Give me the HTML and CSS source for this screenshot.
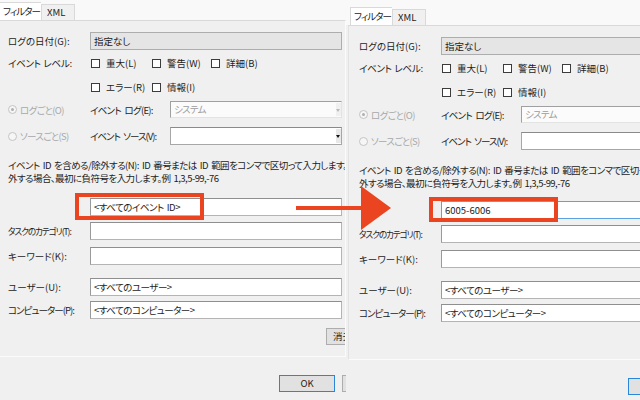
FILE: index.html
```html
<!DOCTYPE html>
<html lang="ja">
<head>
<meta charset="utf-8">
<title>フィルター</title>
<link rel="stylesheet" href="styles.css">
</head>
<body>
<div class="stage">
  <section class="dlg dlg-left">
    <div class="head">
      <div class="tabs">
        <div class="tab tab-on">フィルター</div>
        <div class="tab">XML</div>
      </div>
    </div>
    <div class="pane">
      <div class="row row-date">
        <span class="lbl">ログの日付(G):</span>
        <div class="combo combo-flat">指定なし</div>
      </div>
      <div class="row row-level">
        <span class="lbl">イベント レベル:</span>
        <div class="checks">
          <span class="chk"><i class="box"></i>重大(L)</span>
          <span class="chk"><i class="box"></i>警告(W)</span>
          <span class="chk"><i class="box"></i>詳細(B)</span>
          <span class="chk"><i class="box"></i>エラー(R)</span>
          <span class="chk"><i class="box"></i>情報(I)</span>
        </div>
      </div>
      <div class="row row-src1">
        <span class="radio off"><i class="dot on"></i><span class="t6">ログごと(O)</span></span>
        <span class="lbl2 t7">イベント ログ(E):</span>
        <div class="combo combo-dis">システム<i class="drop drop-dis"></i></div>
      </div>
      <div class="row row-src2">
        <span class="radio off"><i class="dot"></i><span class="t7">ソースごと(S)</span></span>
        <span class="lbl2 t9">イベント ソース(V):</span>
        <div class="combo combo-edit"><i class="drop"></i></div>
      </div>
      <p class="desc">イベント ID を含める/除外する(N): ID 番号または ID 範囲をコンマで区切って入力します。除<br>外する場合、最初に負符号を入力します。例 1,3,5-99,-76</p>
      <div class="row row-id">
        <span class="lbl"></span>
        <div class="edit">&lt;すべてのイベント ID&gt;</div>
        <span class="mark"></span>
      </div>
      <div class="row row-task">
        <span class="lbl t11">タスクのカテゴリ(T):</span>
        <div class="edit"></div>
      </div>
      <div class="row row-kw">
        <span class="lbl">キーワード(K):</span>
        <div class="edit"></div>
      </div>
      <div class="row row-user">
        <span class="lbl">ユーザー(U):</span>
        <div class="edit">&lt;すべてのユーザー&gt;</div>
      </div>
      <div class="row row-pc">
        <span class="lbl t9">コンピューター(P):</span>
        <div class="edit">&lt;すべてのコンピューター&gt;</div>
      </div>
      <div class="row row-clear">
        <span class="btn btn-clear">消去(A)</span>
      </div>
    </div>
    <div class="foot">
      <span class="btn btn-ok">OK</span>
      <span class="btn">キャンセル</span>
    </div>
  </section>

  <section class="dlg dlg-right">
    <div class="head">
      <div class="tabs">
        <div class="tab tab-on">フィルター</div>
        <div class="tab">XML</div>
      </div>
    </div>
    <div class="pane">
      <div class="row row-date">
        <span class="lbl">ログの日付(G):</span>
        <div class="combo combo-flat">指定なし</div>
      </div>
      <div class="row row-level">
        <span class="lbl">イベント レベル:</span>
        <div class="checks">
          <span class="chk"><i class="box"></i>重大(L)</span>
          <span class="chk"><i class="box"></i>警告(W)</span>
          <span class="chk"><i class="box"></i>詳細(B)</span>
          <span class="chk"><i class="box"></i>エラー(R)</span>
          <span class="chk"><i class="box"></i>情報(I)</span>
        </div>
      </div>
      <div class="row row-src1">
        <span class="radio off"><i class="dot on"></i><span class="t6">ログごと(O)</span></span>
        <span class="lbl2 t7">イベント ログ(E):</span>
        <div class="combo combo-dis">システム<i class="drop drop-dis"></i></div>
      </div>
      <div class="row row-src2">
        <span class="radio off"><i class="dot"></i><span class="t7">ソースごと(S)</span></span>
        <span class="lbl2 t9">イベント ソース(V):</span>
        <div class="combo combo-edit"><i class="drop"></i></div>
      </div>
      <p class="desc">イベント ID を含める/除外する(N): ID 番号または ID 範囲をコンマで区切って入力します。除<br>外する場合、最初に負符号を入力します。例 1,3,5-99,-76</p>
      <div class="row row-id">
        <span class="lbl"></span>
        <div class="edit edit-focus">6005-6006</div>
        <span class="mark"></span>
      </div>
      <div class="row row-task">
        <span class="lbl t11">タスクのカテゴリ(T):</span>
        <div class="edit"></div>
      </div>
      <div class="row row-kw">
        <span class="lbl">キーワード(K):</span>
        <div class="edit"></div>
      </div>
      <div class="row row-user">
        <span class="lbl">ユーザー(U):</span>
        <div class="edit">&lt;すべてのユーザー&gt;</div>
      </div>
      <div class="row row-pc">
        <span class="lbl t9">コンピューター(P):</span>
        <div class="edit">&lt;すべてのコンピューター&gt;</div>
      </div>
      <div class="row row-clear">
        <span class="btn btn-clear">消去(A)</span>
      </div>
    </div>
    <div class="foot">
      <span class="btn btn-ok">OK</span>
      <span class="btn">キャンセル</span>
    </div>
  </section>

  <svg class="arrow" width="100" height="50" viewBox="0 0 100 50" aria-hidden="true">
    <rect x="2" y="23" width="67" height="4" fill="#ea4420"/>
    <polygon points="67,3 97,25 67,47" fill="#ea4420"/>
  </svg>
</div>
</body>
</html>
```

FILE: styles.css
```css
* { box-sizing: border-box; }
html, body { margin: 0; padding: 0; }
body {
  width: 640px;
  height: 400px;
  overflow: hidden;
  background: #f0f0f0;
  font-family: "Noto Sans CJK JP", "Noto Sans", sans-serif;
  font-size: 9.5px;
  font-feature-settings: "palt";
  color: #1c1c1c;
}
.stage {
  position: relative;
  display: flex;
  width: 640px;
  height: 400px;
  overflow: hidden;
}
.dlg {
  flex: none;
  height: 400px;
  overflow: hidden;
  background: #f0f0f0;
}
.dlg-left { width: 346px; --off: -3px; --top: 2px; --foot: 279px; }
.dlg-right { width: 294px; --off: 2px; --top: 7px; --foot: 282px; }

.head {
  background: #f9f9f9;
  padding-top: var(--top);
}
.tabs {
  display: flex;
  align-items: flex-end;
  height: 18px;
  margin-left: calc(var(--off) + 2px);
}
.tab {
  flex: none;
  width: 34px;
  height: 16px;
  border: 1px solid #d9d9d9;
  border-bottom: none;
  background: #f0f0f0;
  padding: 0 0 0 5px;
  line-height: 15px;
  white-space: nowrap;
}
.tab-on {
  width: 42px;
  height: 18px;
  background: #fff;
  border-right: none;
  padding: 0 0 0 3px;
  line-height: 17px;
  letter-spacing: -0.9px;
}

.pane {
  width: 349px;
  margin-left: var(--off);
  border: 1px solid #fbfbfb;
  border-top-color: #d9d9d9;
  border-left-color: #e2e2e2;
  padding: 11px 3px 11px 10px;
  overflow: hidden;
  background: #f0f0f0;
}
.row {
  display: flex;
  align-items: center;
  position: relative;
}
.lbl { flex: none; width: 82px; white-space: nowrap; overflow: hidden; }
.lbl2 { flex: none; width: 80px; white-space: nowrap; }
.t6 { letter-spacing: -0.6px; }
.t7 { letter-spacing: -0.7px; word-spacing: 2px; }
.t9 { letter-spacing: -0.95px; word-spacing: 2px; }
.t11 { font-size: 8.6px; letter-spacing: -1.05px; }

.row-date { height: 18px; }
.combo, .edit {
  flex: 1;
  height: 100%;
  position: relative;
  white-space: nowrap;
  overflow: hidden;
  padding-left: 3px;
}
.combo-flat {
  background: #e5e5e5;
  border: 1px solid #adadad;
  line-height: 16px;
}
.combo-dis {
  background: #fbfbfb;
  border: 1px solid #e3e3e3;
  border-top-color: #a0a0a0;
  border-left-color: #a0a0a0;
  color: #9c9c9c;
  line-height: 15px;
  letter-spacing: -0.7px;
}
.combo-edit {
  background: #fff;
  border: 1px solid #a7a7a7;
  border-top-color: #8a8a8a;
}
.drop {
  position: absolute;
  right: 0;
  top: 1px;
  bottom: 1px;
  width: 5px;
  background: #e8e8e8;
}
.drop::after {
  content: "";
  position: absolute;
  left: 0;
  top: 50%;
  margin-top: -1px;
  border-left: 2.5px solid transparent;
  border-right: 2.5px solid transparent;
  border-top: 3px solid #111;
}
.drop-dis { background: #f0f0f0; }
.drop-dis::after { border-top-color: #bbb; }

.row-level { margin-top: 6px; align-items: flex-start; }
.row-level .lbl { line-height: 14px; letter-spacing: -0.3px; word-spacing: 1px; }
.checks {
  display: grid;
  grid-template-columns: 61px 59px auto;
  row-gap: 10px;
}
.chk {
  display: flex;
  align-items: center;
  height: 14px;
  gap: 6px;
  padding-left: 1px;
  white-space: nowrap;
}
.box {
  width: 9px;
  height: 9px;
  background: #fff;
  border: 1px solid #3c3c3c;
  flex: none;
}

.row-src1 { height: 17px; margin-top: 7px; }
.row-src2 { height: 18px; margin-top: 9px; }
.radio {
  flex: none;
  width: 82px;
  display: flex;
  align-items: center;
  gap: 3px;
  white-space: nowrap;
}
.radio.off { color: #a8a8a8; }
.dot {
  width: 9px;
  height: 9px;
  border-radius: 50%;
  border: 1px solid #c4c4c4;
  background: #f6f6f6;
  position: relative;
  flex: none;
}
.dot.on::after {
  content: "";
  position: absolute;
  left: 2px;
  top: 2px;
  width: 3px;
  height: 3px;
  border-radius: 50%;
  background: #b0b0b0;
}

.desc {
  margin: 14px 0 0;
  line-height: 12.5px;
  letter-spacing: -0.55px;
  word-spacing: 1.5px;
  white-space: nowrap;
}

.edit {
  height: 18px;
  background: #fff;
  border: 1px solid #b4b4b4;
  border-top-color: #8f8f8f;
  border-left-color: #9a9a9a;
  line-height: 16px;
  letter-spacing: -0.5px;
  word-spacing: 1.5px;
}
.edit-focus { border-color: #5aa2e2; letter-spacing: 0; }

.row-id { margin-top: 14px; height: 18px; }
.row-task { margin-top: 6px; height: 18px; }
.row-kw { margin-top: 7px; height: 18px; }
.row-user { margin-top: 13px; height: 18px; }
.row-pc { margin-top: 5px; height: 18px; }
.row-clear { margin-top: 9px; height: 17px; }

.mark {
  position: absolute;
  left: 67px;
  top: -5px;
  width: 129px;
  height: 27px;
  border: 4px solid #ea4420;
}
.dlg-right .row-id { margin-top: 12px; }
.dlg-right .mark { left: 70px; top: -4px; height: 25px; }

.btn {
  flex: none;
  display: block;
  height: 17px;
  width: 56px;
  background: #e1e1e1;
  border: 1px solid #adadad;
  text-align: center;
  line-height: 15px;
  white-space: nowrap;
}
.btn-clear { margin-left: 318px; width: 60px; text-align: left; padding-left: 6px; }
.btn-ok { border-color: #2a86d8; }

.foot {
  display: flex;
  gap: 7px;
  padding-top: 18px;
  padding-left: var(--foot);
}

.arrow {
  position: absolute;
  left: 294px;
  top: 183px;
}
```
